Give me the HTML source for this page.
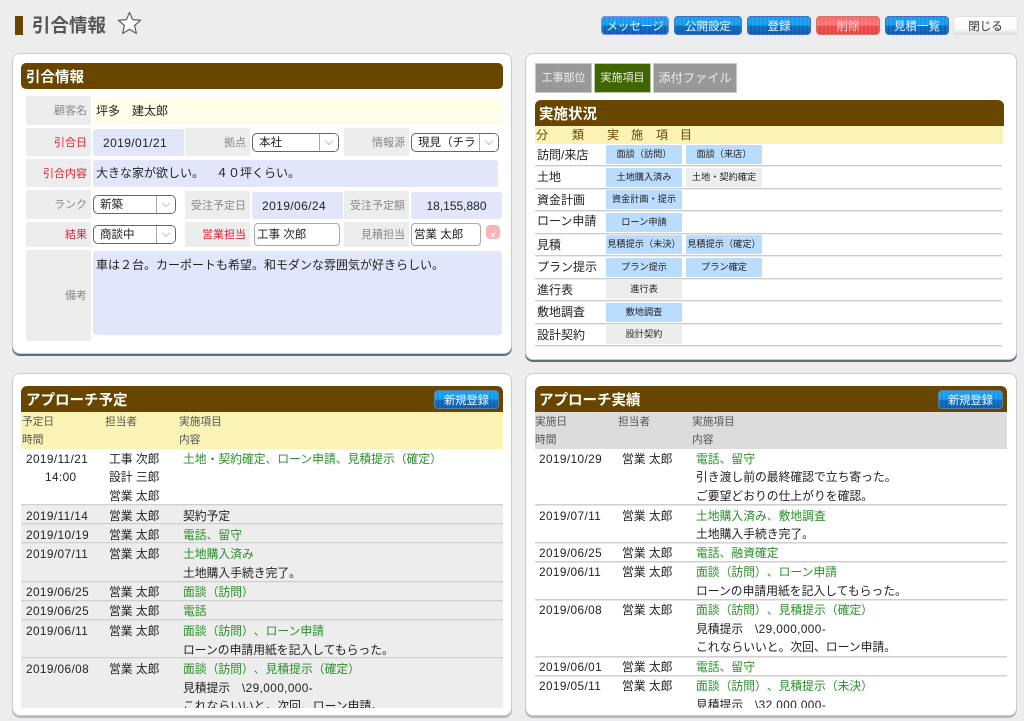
<!DOCTYPE html>
<html lang="ja"><head><meta charset="utf-8"><title>引合情報</title>
<style>
*{box-sizing:border-box;text-spacing-trim:space-all}
html,body{margin:0;padding:0}
html{background:#ededed}
body{width:1024px;height:721px;overflow:hidden;position:relative;background:#ededed;font-family:"Liberation Sans","Noto Sans CJK JP",sans-serif;color:#222;font-size:11.8px;filter:blur(.3px)}
.a,.t,.l,.v,.b,.s,.i,.c{position:absolute}
.t{white-space:nowrap;line-height:19px;height:19px;margin-top:1px}
.dt{letter-spacing:.4px}
.g{color:#2a8f2a}
.p{position:absolute;background:#fff;border-radius:8px;border:1px solid #c9cbd2;box-shadow:0 2px 0 #5f6d85}
.p.lt{box-shadow:0 2px 0 #b4b8c2}
.h{position:absolute;background:#684600;border-radius:6px 6px 0 0;color:#fff;font-weight:bold;font-size:14.5px;line-height:26px;padding-left:5px;padding-top:2px;height:26px;white-space:nowrap}
.l{background:#ededed;color:#888;text-align:right;padding-right:4px;padding-top:1px;font-size:11px;white-space:nowrap;left:26px;width:65px}
.r{color:#e2222e}
.v{background:#e1e6fb;border-radius:3px;white-space:nowrap;font-size:12px;padding-top:1px}
.s{background:#fff;border:1px solid #666;border-radius:5px;height:19px;line-height:18px;padding-left:6px;font-size:11.5px;white-space:nowrap;overflow:hidden}
.s:after{content:"";position:absolute;right:0;top:0;bottom:0;width:18px;border-left:1px solid #aaa;background:#fff}
.s:before{content:"";position:absolute;right:6px;top:4px;width:5px;height:5px;border-right:1px solid #c4c4c4;border-bottom:1px solid #c4c4c4;transform:rotate(45deg);z-index:1}
.i{background:#fff;border:1px solid #aaa;border-radius:4px;height:23px;line-height:21px;padding-left:2px;padding-top:1px;font-size:11.5px;white-space:nowrap}
.b{top:16px;height:19px;border-radius:4px;color:#e8f4ff;text-align:center;line-height:20px;font-size:11.5px;white-space:nowrap;border:1px solid #3f6fc0;background:repeating-linear-gradient(90deg,rgba(255,255,255,.05) 0 2px,rgba(0,0,0,.03) 2px 4px),linear-gradient(#1d9df0 0,#14a0ef 48%,#0c6fc4 52%,#0d5fae 100%)}
.b.red{border-color:#d9706f;background:repeating-linear-gradient(90deg,rgba(255,255,255,.06) 0 2px,rgba(0,0,0,.02) 2px 4px),linear-gradient(#fb6a6a 0,#ff7777 48%,#f24a4a 52%,#e34545 100%);color:#ffd6d6}
.b.w{border:1px solid #e0e0e0;background:linear-gradient(#fff 0,#fafafa 70%,#dedede 100%);color:#333}
.tab{position:absolute;top:63px;height:30px;background:#999;color:#eee;text-align:center;line-height:29px;font-size:11px;border:1px solid #c8c8c8;white-space:nowrap}
.c{left:606px;width:76px;height:19px;background:#b9dcff;text-align:center;line-height:18px;font-size:9.2px;white-space:nowrap;color:#222}
.c.n{background:#ededed}
.c.d{left:686px}
.ln{position:absolute;left:535px;width:467px;height:2px;background:linear-gradient(#cbcbcb 50%,#ececec 50%)}
.cat{position:absolute;left:537px;font-size:12px;line-height:20px;white-space:nowrap}
.row{position:absolute;height:2px;background:linear-gradient(#cfcfcf 50%,#e6e6e6 50%)}
.clip{position:absolute;overflow:hidden;top:449px;height:259px}
.sh{position:absolute;top:126px;color:#684600;font-size:12px;line-height:18px}
.hd{font-size:10.7px;color:#555}
</style></head><body>
<div class="a" style="left:15px;top:16px;width:8px;height:19px;background:#684600"></div>
<div class="t" style="left:32px;top:13px;margin-top:0;font-size:18.5px;line-height:26px;height:26px;font-weight:bold;color:#555">引合情報</div>
<svg class="a" style="left:116px;top:10px" width="27" height="26" viewBox="0 0 27 26"><path d="M13.5 2.5 L16.6 9.6 L24.6 10.3 L18.6 15.5 L20.4 23.4 L13.5 19.3 L6.6 23.4 L8.4 15.5 L2.4 10.3 L10.4 9.6 Z" fill="#fff" stroke="#666" stroke-width="1.3" stroke-linejoin="round"/></svg>

<div class="b" style="left:601px;width:68px;border-color:#7f8fe8">メッセージ</div>
<div class="b" style="left:674px;width:68px">公開設定</div>
<div class="b" style="left:747px;width:64px">登録</div>
<div class="b red" style="left:816px;width:64px">削除</div>
<div class="b" style="left:885px;width:64px">見積一覧</div>
<div class="b w" style="left:953px;width:65px">閉じる</div>

<!-- panel 1 -->
<div class="p" style="left:12px;top:53px;width:500px;height:301px"></div>
<div class="h" style="left:21px;top:63px;width:482px;border-radius:5px">引合情報</div>
<div class="l" style="top:96px;height:29px;line-height:29px">顧客名</div>
<div class="v" style="left:93px;top:97px;width:410px;height:27px;line-height:26px;background:#fffde8;padding-left:3px;border-radius:0">坪多　建太郎</div>
<div class="l r" style="top:128px;height:28px;line-height:28px">引合日</div>
<div class="v dt" style="left:93px;top:129px;width:91px;height:27px;line-height:27px;padding-left:10px;border-radius:3px 0 0 3px">2019/01/21</div>
<div class="l" style="left:185px;top:128px;height:28px;line-height:28px">拠点</div>
<div class="s" style="left:252px;top:133px;width:87px">本社</div>
<div class="l" style="left:344px;top:128px;height:28px;line-height:28px">情報源</div>
<div class="s" style="left:411px;top:133px;width:88px">現見（チラ</div>
<div class="l r" style="top:159px;height:28px;line-height:28px">引合内容</div>
<div class="v" style="left:93px;top:160px;width:405px;height:27px;line-height:27px;padding-left:3px;padding-top:0">大きな家が欲しい。　４０坪くらい。</div>
<div class="l" style="top:190px;height:29px;line-height:29px">ランク</div>
<div class="s" style="left:93px;top:195px;width:83px">新築</div>
<div class="l" style="left:185px;top:191px;height:28px;line-height:28px">受注予定日</div>
<div class="v dt" style="left:252px;top:192px;width:91px;height:27px;line-height:27px;padding-left:10px;border-radius:3px 0 0 3px">2019/06/24</div>
<div class="l" style="left:344px;top:191px;height:28px;line-height:28px">受注予定額</div>
<div class="v" style="left:411px;top:192px;width:91px;height:27px;line-height:27px;text-align:center">18,155,880</div>
<div class="l r" style="top:222px;height:25px;line-height:25px">結果</div>
<div class="s" style="left:93px;top:225px;width:83px">商談中</div>
<div class="l r" style="left:185px;top:222px;height:25px;line-height:25px">営業担当</div>
<div class="i" style="left:254px;top:223px;width:86px">工事 次郎</div>
<div class="l" style="left:344px;top:222px;height:25px;line-height:25px">見積担当</div>
<div class="i" style="left:411px;top:223px;width:70px">営業 太郎</div>
<div class="a" style="left:486px;top:225px;width:14px;height:14px;background:#fab4b8;border-radius:4px;color:#fff;font-size:9px;font-weight:bold;line-height:20px;text-align:center;overflow:hidden">×</div>
<div class="l" style="top:250px;height:91px;line-height:91px">備考</div>
<div class="v" style="left:93px;top:251px;width:409px;height:84px;padding:4px 3px;line-height:20px">車は２台。カーポートも希望。和モダンな雰囲気が好きらしい。</div>

<!-- panel 2 -->
<div class="p" style="left:525px;top:53px;width:492px;height:307px"></div>
<div class="tab" style="left:535px;width:57px">工事部位</div>
<div class="tab" style="left:594px;width:57px;background:#3f6600;border-color:#b9c9a8">実施項目</div>
<div class="tab" style="left:653px;width:84px;font-size:12.2px">添付ファイル</div>
<div class="h" style="left:535px;top:100px;width:469px;padding-left:4px">実施状況</div>
<div class="a" style="left:535px;top:126px;width:468px;height:18px;background:#fbf3b5"></div>
<div class="sh" style="left:536px">分</div><div class="sh" style="left:572px">類</div><div class="sh" style="left:607px">実</div><div class="sh" style="left:631px">施</div><div class="sh" style="left:656px">項</div><div class="sh" style="left:680px">目</div>

<div class="cat" style="top:145px">訪問/来店</div>
<div class="c" style="top:145px">面談（訪問）</div><div class="c d" style="top:145px">面談（来店）</div><div class="ln" style="top:165px"></div>
<div class="cat" style="top:167px">土地</div>
<div class="c" style="top:168px">土地購入済み</div><div class="c d n" style="top:168px">土地・契約確定</div><div class="ln" style="top:188px"></div>
<div class="cat" style="top:190px">資金計画</div>
<div class="c" style="top:190px">資金計画・提示</div><div class="ln" style="top:210px"></div>
<div class="cat" style="top:211px">ローン申請</div>
<div class="c" style="top:213px">ローン申請</div><div class="ln" style="top:233px"></div>
<div class="cat" style="top:235px">見積</div>
<div class="c" style="top:235px">見積提示（未決）</div><div class="c d" style="top:235px">見積提示（確定）</div><div class="ln" style="top:255px"></div>
<div class="cat" style="top:257px">プラン提示</div>
<div class="c" style="top:258px">プラン提示</div><div class="c d" style="top:258px">プラン確定</div><div class="ln" style="top:278px"></div>
<div class="cat" style="top:280px">進行表</div>
<div class="c n" style="top:280px">進行表</div><div class="ln" style="top:300px"></div>
<div class="cat" style="top:302px">敷地調査</div>
<div class="c" style="top:303px">敷地調査</div><div class="ln" style="top:323px"></div>
<div class="cat" style="top:325px">設計契約</div>
<div class="c n" style="top:325px">設計契約</div><div class="ln" style="top:345px"></div>

<!-- panel 3 -->
<div class="p lt" style="left:12px;top:373px;width:500px;height:343px"></div>
<div class="h" style="left:21px;top:386px;width:482px">アプローチ予定</div>
<div class="b" style="left:434px;top:390px;width:65px;border-color:#5b7fa0;font-size:11.2px">新規登録</div>
<div class="a" style="left:21px;top:412px;width:482px;height:37px;background:#fbf3b5"></div>
<div class="t hd" style="left:22px;top:412px">予定日</div>
<div class="t hd" style="left:105px;top:412px">担当者</div>
<div class="t hd" style="left:179px;top:412px">実施項目</div>
<div class="t hd" style="left:22px;top:430px">時間</div>
<div class="t hd" style="left:179px;top:430px">内容</div>

<div class="clip" style="left:21px;width:482px">
<div class="a" style="left:0;top:55px;width:482px;height:204px;background:#ededed"></div>
<div class="row" style="left:0;top:55px;width:482px"></div>
<div class="row" style="left:0;top:74px;width:482px"></div>
<div class="row" style="left:0;top:93px;width:482px"></div>
<div class="row" style="left:0;top:132px;width:482px"></div>
<div class="row" style="left:0;top:151px;width:482px"></div>
<div class="row" style="left:0;top:170px;width:482px"></div>
<div class="row" style="left:0;top:208px;width:482px"></div>
<div class="t dt" style="left:5px;top:0">2019/11/21</div><div class="t dt" style="left:24px;top:18px">14:00</div>
<div class="t" style="left:88px;top:0">工事 次郎</div><div class="t" style="left:88px;top:18px">設計 三郎</div><div class="t" style="left:88px;top:37px">営業 太郎</div>
<div class="t g" style="left:162px;top:0">土地・契約確定、ローン申請、見積提示（確定）</div>
<div class="t dt" style="left:5px;top:57px">2019/11/14</div><div class="t" style="left:88px;top:57px">営業 太郎</div><div class="t" style="left:162px;top:57px">契約予定</div>
<div class="t dt" style="left:5px;top:76px">2019/10/19</div><div class="t" style="left:88px;top:76px">営業 太郎</div><div class="t g" style="left:162px;top:76px">電話、留守</div>
<div class="t dt" style="left:5px;top:95px">2019/07/11</div><div class="t" style="left:88px;top:95px">営業 太郎</div><div class="t g" style="left:162px;top:95px">土地購入済み</div><div class="t" style="left:162px;top:114px">土地購入手続き完了。</div>
<div class="t dt" style="left:5px;top:133px">2019/06/25</div><div class="t" style="left:88px;top:133px">営業 太郎</div><div class="t g" style="left:162px;top:133px">面談（訪問）</div>
<div class="t dt" style="left:5px;top:152px">2019/06/25</div><div class="t" style="left:88px;top:152px">営業 太郎</div><div class="t g" style="left:162px;top:152px">電話</div>
<div class="t dt" style="left:5px;top:172px">2019/06/11</div><div class="t" style="left:88px;top:172px">営業 太郎</div><div class="t g" style="left:162px;top:172px">面談（訪問）、ローン申請</div><div class="t" style="left:162px;top:191px">ローンの申請用紙を記入してもらった。</div>
<div class="t dt" style="left:5px;top:210px">2019/06/08</div><div class="t" style="left:88px;top:210px">営業 太郎</div><div class="t g" style="left:162px;top:210px">面談（訪問）、見積提示（確定）</div><div class="t" style="left:162px;top:229px">見積提示　<span class="dt">\29,000,000-</span></div><div class="t" style="left:162px;top:247px">これならいいと。次回、ローン申請。</div>
</div>

<!-- panel 4 -->
<div class="p lt" style="left:525px;top:373px;width:492px;height:343px"></div>
<div class="h" style="left:535px;top:386px;width:472px;padding-left:4px">アプローチ実績</div>
<div class="b" style="left:938px;top:390px;width:65px;border-color:#5b7fa0;font-size:11.2px">新規登録</div>
<div class="a" style="left:535px;top:412px;width:472px;height:37px;background:#dcdcdc"></div>
<div class="t hd" style="left:535px;top:412px">実施日</div>
<div class="t hd" style="left:618px;top:412px">担当者</div>
<div class="t hd" style="left:692px;top:412px">実施項目</div>
<div class="t hd" style="left:535px;top:430px">時間</div>
<div class="t hd" style="left:692px;top:430px">内容</div>

<div class="clip" style="left:535px;width:472px">
<div class="row" style="left:0;top:55px;width:472px"></div>
<div class="row" style="left:0;top:93px;width:472px"></div>
<div class="row" style="left:0;top:112px;width:472px"></div>
<div class="row" style="left:0;top:150px;width:472px"></div>
<div class="row" style="left:0;top:207px;width:472px"></div>
<div class="row" style="left:0;top:226px;width:472px"></div>
<div class="t dt" style="left:4px;top:0">2019/10/29</div><div class="t" style="left:87px;top:0">営業 太郎</div><div class="t g" style="left:161px;top:0">電話、留守</div><div class="t" style="left:161px;top:18px">引き渡し前の最終確認で立ち寄った。</div><div class="t" style="left:161px;top:37px">ご要望どおりの仕上がりを確認。</div>
<div class="t dt" style="left:4px;top:57px">2019/07/11</div><div class="t" style="left:87px;top:57px">営業 太郎</div><div class="t g" style="left:161px;top:57px">土地購入済み、敷地調査</div><div class="t" style="left:161px;top:75px">土地購入手続き完了。</div>
<div class="t dt" style="left:4px;top:94px">2019/06/25</div><div class="t" style="left:87px;top:94px">営業 太郎</div><div class="t g" style="left:161px;top:94px">電話、融資確定</div>
<div class="t dt" style="left:4px;top:113px">2019/06/11</div><div class="t" style="left:87px;top:113px">営業 太郎</div><div class="t g" style="left:161px;top:113px">面談（訪問）、ローン申請</div><div class="t" style="left:161px;top:132px">ローンの申請用紙を記入してもらった。</div>
<div class="t dt" style="left:4px;top:151px">2019/06/08</div><div class="t" style="left:87px;top:151px">営業 太郎</div><div class="t g" style="left:161px;top:151px">面談（訪問）、見積提示（確定）</div><div class="t" style="left:161px;top:170px">見積提示　<span class="dt">\29,000,000-</span></div><div class="t" style="left:161px;top:188px">これならいいと。次回、ローン申請。</div>
<div class="t dt" style="left:4px;top:208px">2019/06/01</div><div class="t" style="left:87px;top:208px">営業 太郎</div><div class="t g" style="left:161px;top:208px">電話、留守</div>
<div class="t dt" style="left:4px;top:227px">2019/05/11</div><div class="t" style="left:87px;top:227px">営業 太郎</div><div class="t g" style="left:161px;top:227px">面談（訪問）、見積提示（未決）</div><div class="t" style="left:161px;top:246px">見積提示　<span class="dt">\32,000,000-</span></div>
</div>
</body></html>
